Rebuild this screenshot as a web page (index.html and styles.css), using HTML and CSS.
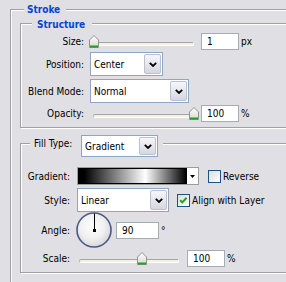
FILE: index.html
```html
<!DOCTYPE html>
<html>
<head>
<meta charset="utf-8">
<link rel="stylesheet" href="styles.css">
</head>
<body>
<div class="group stroke">
  <div class="legend stroke-legend">Stroke</div>
  <div class="group structure">
    <div class="legend structure-legend">Structure</div>
    <div class="row r-size">
      <span class="label">Size:</span>
      <div class="ctrl">
        <div class="slider slider-s">
          <div class="track"></div>
          <svg class="thumb" style="left:0px" width="10" height="14" viewBox="0 0 10 14"><defs><linearGradient id="tg1" x1="0" y1="0" x2="0" y2="1"><stop offset="0" stop-color="#ffffff"/><stop offset="1" stop-color="#d8d8d0"/></linearGradient></defs><path d="M5 0.5 L9.5 5 V12.5 H0.5 V5 Z" fill="url(#tg1)" stroke="#8f9490"/><path d="M1 11.5 H9" stroke="#21a121" stroke-width="2"/></svg>
        </div>
        <div class="input in-s">1</div>
        <span class="unit">px</span>
      </div>
    </div>
    <div class="row r-position">
      <span class="label">Position:</span>
      <div class="ctrl">
        <div class="select sel-position"><span class="sel-text">Center</span><span class="sel-btn"><svg width="8" height="5" viewBox="0 0 8 5"><path d="M0.8 0.8 L4 4 L7.2 0.8" fill="none" stroke="#000" stroke-width="1.8"/></svg></span></div>
      </div>
    </div>
    <div class="row r-blend">
      <span class="label">Blend Mode:</span>
      <div class="ctrl">
        <div class="select sel-blend"><span class="sel-text">Normal</span><span class="sel-btn"><svg width="8" height="5" viewBox="0 0 8 5"><path d="M0.8 0.8 L4 4 L7.2 0.8" fill="none" stroke="#000" stroke-width="1.8"/></svg></span></div>
      </div>
    </div>
    <div class="row r-opacity">
      <span class="label">Opacity:</span>
      <div class="ctrl">
        <div class="slider slider-s">
          <div class="track"></div>
          <svg class="thumb" style="left:100px" width="10" height="14" viewBox="0 0 10 14"><defs><linearGradient id="tg2" x1="0" y1="0" x2="0" y2="1"><stop offset="0" stop-color="#ffffff"/><stop offset="1" stop-color="#d8d8d0"/></linearGradient></defs><path d="M5 0.5 L9.5 5 V12.5 H0.5 V5 Z" fill="url(#tg2)" stroke="#8f9490"/><path d="M1 11.5 H9" stroke="#21a121" stroke-width="2"/></svg>
        </div>
        <div class="input in-s">100</div>
        <span class="unit">%</span>
      </div>
    </div>
  </div>

  <div class="group fill">
    <div class="legend fill-legend">
      <span class="label fill-label">Fill Type:</span>
      <div class="select sel-filltype"><span class="sel-text">Gradient</span><span class="sel-btn"><svg width="8" height="5" viewBox="0 0 8 5"><path d="M0.8 0.8 L4 4 L7.2 0.8" fill="none" stroke="#000" stroke-width="1.8"/></svg></span></div>
    </div>
    <div class="row r-gradient">
      <span class="label">Gradient:</span>
      <div class="ctrl">
        <div class="gradient"><div class="grad-swatch"></div><div class="grad-btn"><svg width="5" height="3" viewBox="0 0 5 3"><path d="M0 0 H5 L2.5 3 Z" fill="#000"/></svg></div></div>
        <span class="check check-reverse"></span>
        <span class="check-text">Reverse</span>
      </div>
    </div>
    <div class="row r-style">
      <span class="label">Style:</span>
      <div class="ctrl">
        <div class="select sel-style"><span class="sel-text">Linear</span><span class="sel-btn"><svg width="8" height="5" viewBox="0 0 8 5"><path d="M0.8 0.8 L4 4 L7.2 0.8" fill="none" stroke="#000" stroke-width="1.8"/></svg></span></div>
        <span class="check check-align"><svg width="11" height="11" viewBox="0 0 11 11"><path d="M2.2 5.2 L4.3 7.4 L8.6 2.8" fill="none" stroke="#21a121" stroke-width="2"/></svg></span>
        <span class="check-text">Align with Layer</span>
      </div>
    </div>
    <div class="row r-angle">
      <span class="label">Angle:</span>
      <div class="ctrl">
        <svg class="dial" width="36" height="36" viewBox="0 0 36 36"><defs><radialGradient id="dg" cx="45%" cy="40%" r="60%"><stop offset="0" stop-color="#ffffff"/><stop offset="0.6" stop-color="#f0f0f0"/><stop offset="1" stop-color="#d6d6dc"/></radialGradient></defs><circle cx="18" cy="18" r="17" fill="url(#dg)" stroke="#4a5a84" stroke-width="1.6"/><line x1="18.5" y1="18" x2="18.5" y2="1.5" stroke="#000" stroke-width="1"/><rect x="17" y="17" width="3" height="3" fill="#000"/></svg>
        <div class="input in-angle">90</div>
        <span class="unit">°</span>
      </div>
    </div>
    <div class="row r-scale">
      <span class="label">Scale:</span>
      <div class="ctrl">
        <div class="slider slider-f">
          <div class="track"></div>
          <svg class="thumb" style="left:60px" width="10" height="14" viewBox="0 0 10 14"><defs><linearGradient id="tg3" x1="0" y1="0" x2="0" y2="1"><stop offset="0" stop-color="#ffffff"/><stop offset="1" stop-color="#d8d8d0"/></linearGradient></defs><path d="M5 0.5 L9.5 5 V12.5 H0.5 V5 Z" fill="url(#tg3)" stroke="#8f9490"/><path d="M1 11.5 H9" stroke="#21a121" stroke-width="2"/></svg>
        </div>
        <div class="input in-scale">100</div>
        <span class="unit">%</span>
      </div>
    </div>
  </div>
</div>
</body>
</html>
```

FILE: styles.css
```css
* { box-sizing: border-box; }
html, body { margin: 0; padding: 0; }
body {
  width: 286px;
  height: 282px;
  overflow: hidden;
  background: #e0dfe3;
  font-family: "DejaVu Sans Condensed", "DejaVu Sans", sans-serif;
  font-stretch: condensed;
  font-size: 10px;
  line-height: 13px;
  color: #000;
}
.group {
  border: 1px solid #a0a0a4;
  box-shadow: inset 1px 1px 0 #fff, 1px 1px 0 #fff;
}
.stroke {
  margin: 9px 0 0 10px;
  width: 276px;
  height: 273px;
  border-right: none;
  border-bottom: none;
  box-shadow: inset 1px 1px 0 #fff;
}
.legend {
  width: max-content;
  background: #e0dfe3;
  font-weight: bold;
  color: #0046d5;
}
.stroke-legend { margin: -7px 0 0 13px; padding: 0 6px 0 3px; }
.structure {
  margin: 7px 0 0 9px;
  width: 266px;
  border-right: none;
  padding-bottom: 5px;
}
.structure-legend { margin: -6px 0 0 11px; padding: 0 7px 0 5px; }

.row { display: grid; align-items: center; }
.structure .row { grid-template-columns: 63px auto; column-gap: 5px; }
.fill .row { grid-template-columns: 49px auto; column-gap: 7px; }
.label { text-align: right; white-space: nowrap; }
.ctrl { display: flex; align-items: center; }

.r-size { margin-top: 2px; height: 17px; }
.r-position { margin-top: 2px; }
.r-blend { margin-top: 3px; }
.r-opacity { margin-top: 2px; height: 17px; }

.fill {
  margin: 15px 0 0 9px;
  width: 266px;
  border-right: none;
  padding-bottom: 5px;
}
.fill-legend {
  display: flex;
  align-items: flex-start;
  margin: -9px 0 0 9px;
  padding: 0 5px 0 4px;
  font-weight: normal;
  color: #000;
}
.fill-label { width: 43px; text-align: left; margin-top: 2px; }
.r-gradient { margin-top: 10px; }
.r-style { margin-top: 3px; }
.r-angle { margin-top: 0; }
.r-scale { margin-top: 2px; height: 17px; }

/* slider */
.slider { position: relative; height: 14px; padding-top: 7px; }
.slider-s { width: 110px; padding-left: 4px; padding-right: 5px; }
.slider-f { width: 104px; padding-left: 2px; padding-right: 2px; }
.track {
  height: 4px;
  background: #f3f1e6;
  border-top: 1px solid #a7a7a2;
  border-left: 1px solid #b8b8b2;
  border-bottom: 1px solid #ffffff;
  border-right: 1px solid #ffffff;
  border-radius: 2px;
}
.thumb { position: absolute; top: 0; }

/* input */
.input {
  height: 17px;
  border: 1px solid #a5acb2;
  background: #fff;
  padding-left: 5px;
  line-height: 15px;
}
.in-s { width: 38px; margin-left: 2px; }
.in-angle { width: 43px; margin-left: 4px; }
.in-scale { width: 38px; margin-left: 6px; }
.unit { margin-left: 2px; }

/* select */
.select {
  display: flex;
  height: 24px;
  border: 1px solid #8fa5c2;
  background: #fff;
}
.sel-text { flex: 1; padding-left: 3px; align-self: center; padding-top: 1px; }
.sel-btn {
  width: 17px;
  margin: 1px;
  border: 1px solid #b9c0d2;
  border-radius: 2px;
  background: linear-gradient(#f6f6fa, #d6d6e0);
  display: flex;
  align-items: center;
  justify-content: center;
}
.sel-position { width: 73px; margin-left: 1px; }
.sel-blend { width: 99px; margin-left: 1px; }
.sel-filltype { width: 77px; height: 22px; margin-left: 4px; }
.sel-style { width: 92px; }

/* gradient picker */
.gradient {
  display: flex;
  width: 122px;
  height: 18px;
  border: 1px solid #9c9c9c;
  background: #fff;
}
.grad-swatch {
  flex: 1;
  border: 1px solid #000;
  background: linear-gradient(to right, #000 0%, #000 5%, #fff 62%, #000 100%);
}
.grad-btn {
  width: 11px;
  display: flex;
  align-items: center;
  justify-content: center;
}

/* checkbox */
.check {
  width: 13px;
  height: 13px;
  border: 1px solid #1c5180;
  background: linear-gradient(135deg, #dcdcd7, #ffffff);
  display: flex;
  align-items: center;
  justify-content: center;
}
.check-reverse { margin-left: 9px; }
.check-align { margin-left: 8px; }
.check-text { margin-left: 2px; white-space: nowrap; }

.dial { display: block; margin-left: -1px; }
```
